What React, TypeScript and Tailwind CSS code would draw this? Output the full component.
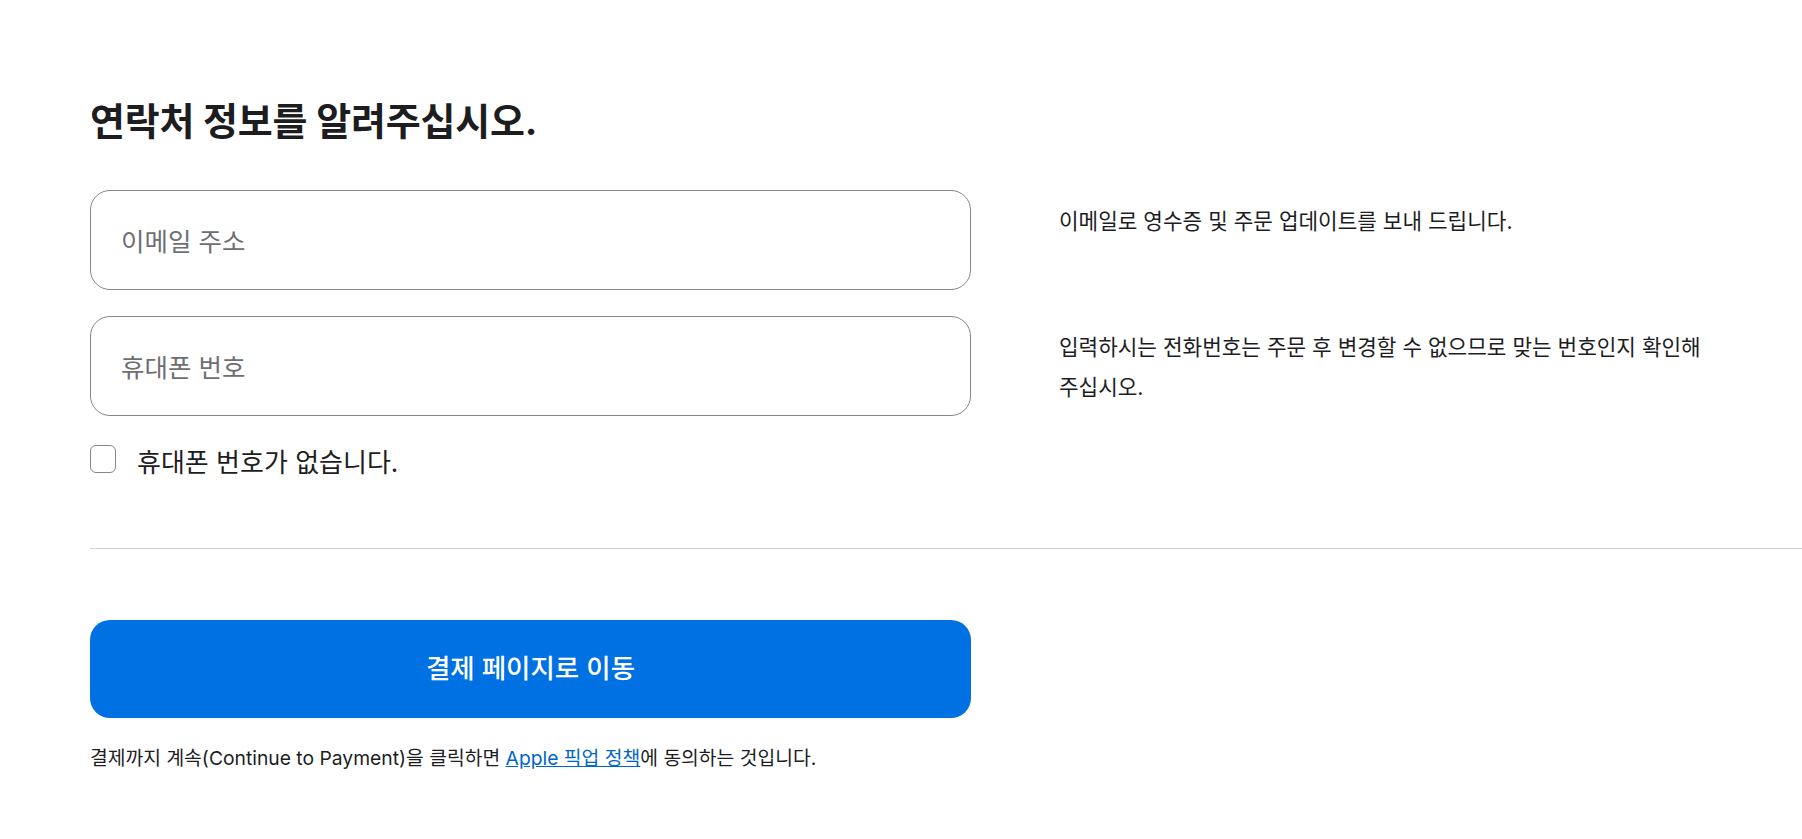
import React from "react";

const font = { fontFamily: '"Inter", "Noto Sans CJK KR", sans-serif' };

export default function App() {
  return (
    <div
      className="min-h-[839px] w-full bg-white pl-[90px] pt-[99px] text-[#1d1d1f]"
      style={font}
    >
      <h1 className="text-[38px] font-bold leading-[44px] tracking-[-0.2px]">
        연락처 정보를 알려주십시오.
      </h1>

      <div className="mt-[47px] flex">
        <div className="flex h-[100px] w-[881px] items-center rounded-[20px] border border-[#86868b] pl-[30px] pt-[4px]">
          <span className="text-[25.5px] leading-[30px] text-[#6e6e73]">이메일 주소</span>
        </div>
        <p className="ml-[88px] w-[660px] break-keep pt-[11px] text-[21.3px] leading-[40px]">
          이메일로 영수증 및 주문 업데이트를 보내 드립니다.
        </p>
      </div>

      <div className="mt-[26px] flex">
        <div className="flex h-[100px] w-[881px] items-center rounded-[20px] border border-[#86868b] pl-[30px] pt-[4px]">
          <span className="text-[25.5px] leading-[30px] text-[#6e6e73]">휴대폰 번호</span>
        </div>
        <p className="ml-[88px] w-[660px] break-keep pt-[11px] text-[21.3px] leading-[40px]">
          입력하시는 전화번호는 주문 후 변경할 수 없으므로 맞는 번호인지 확인해 주십시오.
        </p>
      </div>

      <div className="mt-[29px] flex items-start">
        <div className="h-[28px] w-[26px] shrink-0 rounded-[6px] border border-[#86868b] bg-white" />
        <span className="ml-[21px] mt-[3px] text-[26px] leading-[30px]">휴대폰 번호가 없습니다.</span>
      </div>

      <div className="mt-[70px] h-px bg-[#d2d2d7]" />

      <button className="mt-[71px] flex h-[98px] w-[881px] items-center justify-center rounded-[20px] bg-[#0071e3] text-[26.5px] font-medium text-white">
        결제 페이지로 이동
      </button>

      <p className="mt-[26px] text-[19.3px] leading-[28px]">
        결제까지 계속(Continue to Payment)을 클릭하면{" "}
        <a className="text-[#0066cc] underline" href="#">
          Apple 픽업 정책
        </a>
        에 동의하는 것입니다.
      </p>
    </div>
  );
}
